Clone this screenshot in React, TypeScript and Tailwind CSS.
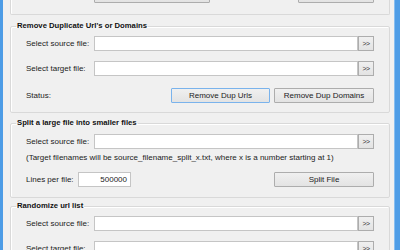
import type { ReactNode } from "react";

const FONT = "font-['Liberation_Sans',Arial,sans-serif]";

function WinButton ({ children, className, focused }: { children?: ReactNode; className: string; focused?: boolean })
{
    return (
        <button
            type="button"
            className={`${className} block h-[15px] shrink-0 rounded-[1px] border ${focused ? "border-[#7ab3ec]" : "border-[#adadad]"} bg-gradient-to-b from-[#f0f0f0] to-[#e3e3e3] text-[8px] leading-[13px] text-[#1b1b1b]`}
        >
            {children}
        </button>
    );
}

function Browse ()
{
    return (
        <button
            type="button"
            className="block h-[15px] w-[16px] shrink-0 border border-[#adadad] bg-gradient-to-b from-[#f0f0f0] to-[#e3e3e3] text-[7px] leading-[13px] tracking-[-0.5px] text-[#333]"
        >
            &gt;&gt;
        </button>
    );
}

function FileRow ({ label }: { label: string })
{
    return (
        <div className="flex h-[15px] items-center">
            <span className="w-[68px] shrink-0 text-[8px] leading-[10px] text-[#1b1b1b]">{label}</span>
            <div className="h-[15px] w-[264px] shrink-0 border border-[#c5c5c5] bg-white" />
            <Browse />
        </div>
    );
}

function Group ({ title, className, children }: { title: string; className: string; children: ReactNode })
{
    return (
        <fieldset className={`rounded-[2px] border border-[#d9d9d9] px-[15px] shadow-[inset_1px_1px_0_#fff] ${className}`}>
            <legend className="-ml-[10px] px-[1px] text-[7.7px] font-bold leading-[10px] text-[#111]">{title}</legend>
            {children}
        </fieldset>
    );
}

export default function App ()
{
    return (
        <div className={`flex h-[250px] w-[400px] overflow-hidden bg-[#f0f0f0] ${FONT}`}>
            <div className="w-[3px] shrink-0 bg-[#4d9ce6]" />
            <div className="w-[391px] shrink-0 pl-[7px] pr-[4px]">
                <div className="flex h-[15px] flex-col rounded-b-[2px] border-x border-b border-[#d9d9d9] shadow-[inset_1px_0_0_#fff]">
                    <div className="-mt-[12px] flex">
                        <WinButton className="ml-[83px] w-[116px]" />
                        <WinButton className="ml-[88px] w-[76px]" />
                    </div>
                </div>

                <Group title="Remove Duplicate Url's or Domains" className="mt-[6px] pt-[5px] pb-[9px]">
                    <FileRow label="Select source file:" />
                    <div className="mt-[10px]">
                        <FileRow label="Select target file:" />
                    </div>
                    <div className="mt-[12px] flex h-[15px] items-center">
                        <span className="w-[145px] shrink-0 text-[8px] leading-[10px] text-[#1b1b1b]">Status:</span>
                        <WinButton className="w-[99px]" focused>Remove Dup Urls</WinButton>
                        <WinButton className="ml-[4px] w-[100px]">Remove Dup Domains</WinButton>
                    </div>
                </Group>

                <Group title="Split a large file into smaller files" className="mt-[5px] pt-[6px] pb-[10px]">
                    <FileRow label="Select source file:" />
                    <p className="mt-[4px] h-[10px] whitespace-nowrap text-[8px] leading-[10px] text-[#1b1b1b]">
                        (Target filenames will be source_filename_split_x.txt, where x is a number starting at 1)
                    </p>
                    <div className="mt-[9px] flex h-[15px] items-center">
                        <span className="w-[52px] shrink-0 text-[8px] leading-[10px] text-[#1b1b1b]">Lines per file:</span>
                        <div className="h-[15px] w-[53px] shrink-0 border border-[#c5c5c5] bg-white pr-[3px] text-right text-[8px] leading-[13px] text-[#1b1b1b]">
                            500000
                        </div>
                        <WinButton className="ml-[143px] w-[100px]">Split File</WinButton>
                    </div>
                </Group>

                <Group title="Randomize url list" className="mt-[3px] pt-[5px] pb-[10px]">
                    <FileRow label="Select source file:" />
                    <div className="mt-[10px]">
                        <FileRow label="Select target file:" />
                    </div>
                </Group>
            </div>
            <div className="w-[6px] shrink-0 border-l border-[#86bdf0] bg-[#4d9ce6]" />
        </div>
    );
}
